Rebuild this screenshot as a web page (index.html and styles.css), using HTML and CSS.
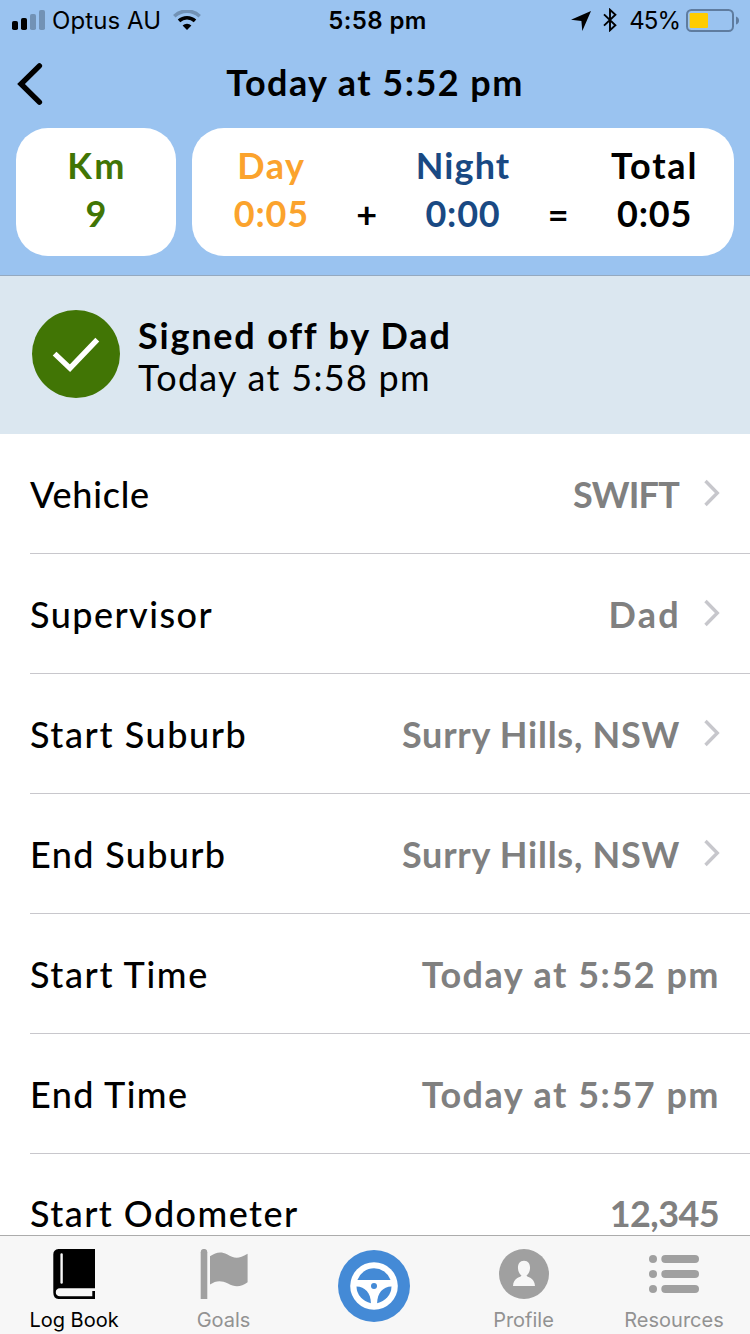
FILE: index.html
```
<!DOCTYPE html>
<html lang="en">
<head>
<meta charset="utf-8">
<title>Log Book</title>
<link rel="stylesheet" href="styles.css">
</head>
<body>
<div class="screen">
  <header class="header">
    <div class="status">
      <div class="status-left">
        <svg class="signal" width="34" height="20" viewBox="0 0 34 20"><rect y="11" width="6" height="9" rx="1.8"/><rect x="9" y="8" width="6" height="12" rx="1.8"/><g fill="#7292b5"><rect x="18" y="4" width="6" height="16" rx="1.8"/><rect x="27" width="6" height="20" rx="1.8"/></g></svg>
        <span class="carrier">Optus AU</span>
        <svg class="wifi" width="28" height="20" viewBox="0 0 28 20"><path d="M1.3 6.2A18.5 18.5 0 0 1 26.7 6.2" fill="none" stroke="#7292b5" stroke-width="3.6"/><path d="M6 10.9A11.6 11.6 0 0 1 22 10.9" fill="none" stroke="#000" stroke-width="3.6"/><path d="M14 20L9.6 15.4A6.4 6.4 0 0 1 18.4 15.4Z"/></svg>
      </div>
      <span class="clock">5:58 pm</span>
      <div class="status-right">
        <svg class="locate" width="20" height="20" viewBox="0 0 20 20"><path d="M20 0L11.3 20L10.4 9.9L0 8.8Z"/></svg>
        <svg class="bluetooth" width="14" height="24" viewBox="0 0 14 24"><path d="M1 6.4L12.4 17.2L7 22.2V1.8L12.4 6.8L1 17.6" fill="none" stroke="#000" stroke-width="1.9"/></svg>
        <span class="percent">45%</span>
        <svg class="battery" width="53" height="23" viewBox="0 0 53 23"><rect x="1" y="1" width="46" height="21" rx="4.5" fill="none" stroke="#5f7c9f" stroke-width="2"/><rect x="3.7" y="4" width="18.3" height="15" rx="1.2" fill="#fc0"/><path d="M50 7.5Q53 8.5 53 11.5T50 15.5Z" fill="#5f7c9f"/></svg>
      </div>
    </div>
    <div class="nav">
      <svg class="back" width="28" height="44" viewBox="0 0 28 44"><path d="M23.4 3.8L5 22L23.4 40.2" fill="none" stroke="#000" stroke-width="5.4" stroke-linecap="round"/></svg>
      <h1 class="title">Today at 5:52 pm</h1>
    </div>
    <div class="cards">
      <div class="card card-km">
        <span class="km-label">Km</span>
        <span>9</span>
      </div>
      <div class="card card-hours">
        <div class="sum day"><span class="day-label">Day</span><span class="digits">0:05</span></div>
        <div class="operator">+</div>
        <div class="sum night"><span class="night-label">Night</span><span class="digits">0:00</span></div>
        <div class="operator">=</div>
        <div class="sum"><span class="total-label">Total</span><span class="digits">0:05</span></div>
      </div>
    </div>
  </header>

  <section class="signoff">
    <svg width="88" height="88" viewBox="0 0 88 88"><circle cx="44" cy="44" r="44" fill="#417505"/><path d="M22.6 43.6L38 58.2L65.3 29.6" fill="none" stroke="#fff" stroke-width="5.4"/></svg>
    <div class="signoff-text">
      <strong>Signed off by Dad</strong>
      <span>Today at 5:58 pm</span>
    </div>
  </section>

  <main class="list">
    <div class="row"><span class="label vehicle">Vehicle</span><span class="value swift">SWIFT</span><svg class="chevron" width="16" height="28" viewBox="0 0 16 28"><path d="M1.5 2L13.3 14L1.5 26"/></svg></div>
    <div class="row"><span class="label">Supervisor</span><span class="value dad">Dad</span><svg class="chevron" width="16" height="28" viewBox="0 0 16 28"><path d="M1.5 2L13.3 14L1.5 26"/></svg></div>
    <div class="row"><span class="label wide">Start Suburb</span><span class="value suburb">Surry Hills, NSW</span><svg class="chevron" width="16" height="28" viewBox="0 0 16 28"><path d="M1.5 2L13.3 14L1.5 26"/></svg></div>
    <div class="row"><span class="label end">End Suburb</span><span class="value suburb">Surry Hills, NSW</span><svg class="chevron" width="16" height="28" viewBox="0 0 16 28"><path d="M1.5 2L13.3 14L1.5 26"/></svg></div>
    <div class="row"><span class="label wide">Start Time</span><span class="value">Today at 5:52 pm</span></div>
    <div class="row"><span class="label end">End Time</span><span class="value">Today at 5:57 pm</span></div>
    <div class="row last"><span class="label">Start Odometer</span><span class="value odometer">12,345</span></div>
  </main>

  <nav class="tabs">
    <div class="tab active">
      <svg width="50" height="50" viewBox="0 0 50 50"><path d="M9.5 0H46V39.3H11Q6.8 39.6 6.8 43.3T11 47.3H43.3V42H46V50H9.5Q4.3 49.5 4.3 43.5V5.5Q4.3 .5 9.5 0Z"/><path d="M12.6 5.5V33.5" stroke="#f7f7f7" stroke-width="2.4" stroke-linecap="round"/></svg>
      <span>Log Book</span>
    </div>
    <div class="tab">
      <svg width="50" height="50" viewBox="0 0 50 50"><path d="M1.7 50V3.2A3.3 3.3 0 0 1 8.3 3.2V50Z"/><path d="M11 7.2C17 3.2 22 2.2 28 5.3C35 9.3 39 10.5 48.6 4.8V33.3C42 38 36 38.5 29 34.5C22 31 17 31.4 11 35.6Z"/></svg>
      <span>Goals</span>
    </div>
    <div class="tab drive">
      <svg width="72" height="72" viewBox="-36 -36 72 72"><circle r="36" fill="#448ad6"/><circle r="23.8" fill="#fff"/><g fill="#448ad6"><path d="M-16.6 -6A17.6 17.6 0 0 1 16.6 -6Z"/><circle r="3"/><path d="M-17.5 .4C-9 .4 -3.2 7 -3.1 17.2A17.5 17.5 0 0 1 -17.5 .4Z"/><path d="M17.5 .4C9 .4 3.2 7 3.1 17.2A17.5 17.5 0 0 0 17.5 .4Z"/></g></svg>
    </div>
    <div class="tab">
      <svg width="50" height="50" viewBox="-25 -25 50 50"><circle r="25"/><path d="M0 -13.2C4.5 -13.2 6.3 -9.7 6 -5.5C5.7 -2 4.4 .2 2.5 1.4C2.3 3.2 10.8 3 11 12.1H-11C-10.8 3 -2.3 3.2 -2.5 1.4C-4.4 .2 -5.7 -2 -6 -5.5C-6.3 -9.7 -4.5 -13.2 0 -13.2Z" fill="#f7f7f7"/></svg>
      <span>Profile</span>
    </div>
    <div class="tab">
      <svg width="50" height="50" viewBox="0 0 50 50"><circle cx="4" cy="10" r="4"/><circle cx="4" cy="25" r="4"/><circle cx="4" cy="40" r="4"/><rect x="12.3" y="6" width="37.7" height="8" rx="4"/><rect x="12.3" y="21" width="37.7" height="8" rx="4"/><rect x="12.3" y="36" width="37.7" height="8" rx="4"/></svg>
      <span>Resources</span>
    </div>
  </nav>
</div>
</body>
</html>
```
FILE: styles.css
```
* { box-sizing: border-box; }
body { margin: 0; background: #fff; color: #000; font-family: Lato, "Open Sans", sans-serif; font-size: 36px; }
svg { display: block; flex: none; }
.screen { width: 750px; height: 1334px; display: flex; flex-direction: column; overflow: hidden; }

.header { height: 276px; flex: none; background: #9ac3f0; border-bottom: 1px solid #94a9c0; }

.status { height: 40px; display: grid; grid-template-columns: 300px 1fr 300px; font-family: Inter, sans-serif; font-size: 24px; line-height: 42px; }
.status-left, .status-right { display: flex; align-items: flex-start; white-space: nowrap; }
.status-left { padding-left: 12px; }
.signal { margin-top: 10px; }
.carrier { margin-left: 6px; letter-spacing: .1px; }
.wifi { margin: 10px 0 0 12px; }
.clock { text-align: center; font-weight: 600; letter-spacing: .4px; padding-left: 5px; }
.status-right { justify-content: flex-end; padding-right: 11px; }
.locate { margin-top: 11px; }
.bluetooth { margin: 8px 0 0 12px; }
.percent { margin-left: 12px; letter-spacing: -1px; }
.battery { margin: 9px 0 0 6px; }

.nav { height: 88px; display: grid; grid-template-columns: 100px 1fr 100px; padding-top: 18px; }
.back { margin: 4px 0 0 16px; }
.title { margin: 0; font-size: 36px; line-height: 48px; font-weight: 700; text-align: center; letter-spacing: 1.45px; }

.cards { display: flex; gap: 16px; padding: 0 16px; }
.card { height: 128px; padding-top: 13px; border-radius: 32px; background: #fff; font-weight: 700; line-height: 48px; text-align: center; }
.card-km { width: 160px; display: flex; flex-direction: column; align-items: center; color: #417505; }
.km-label { letter-spacing: 2.4px; margin-right: -2px; }
.card-hours { width: 542px; display: grid; grid-template-columns: repeat(5, 1fr); padding-left: 31px; padding-right: 32px; }
.sum { display: flex; flex-direction: column; align-items: center; }
.digits { letter-spacing: .8px; margin-right: -1px; }
.day { color: #fba32d; }
.day-label { letter-spacing: 1.6px; margin-right: -1px; }
.night { color: #194983; }
.night-label { letter-spacing: 1.1px; margin-right: -1px; }
.total-label { letter-spacing: 1.8px; margin-right: -1px; }
.operator { padding-top: 49px; }

.signoff { height: 158px; flex: none; display: flex; align-items: flex-start; gap: 18px; padding: 34px 32px 0; background: #dbe7f0; }
.signoff-text { display: flex; flex-direction: column; padding-top: 4px; line-height: 42px; }
.signoff-text strong { letter-spacing: 1.8px; }
.signoff-text span { letter-spacing: 1.3px; }

.list { flex: 1; min-height: 0; overflow: hidden; padding-left: 30px; }
.row { height: 120px; display: flex; align-items: center; border-bottom: 1px solid #c8c7cc; padding: 1px 30px 0 0; line-height: 48px; }
.last { padding-top: 0; padding-bottom: 1px; }
.label { flex: 1; font-weight: 500; letter-spacing: 1.45px; }
.vehicle { letter-spacing: .75px; }
.wide { letter-spacing: 1.6px; }
.end { letter-spacing: 1.35px; }
.value { color: #808080; font-weight: 700; letter-spacing: 1.5px; }
.swift { letter-spacing: -.8px; margin-right: 1px; }
.dad { letter-spacing: 2.3px; margin-right: -1px; }
.suburb { letter-spacing: .75px; }
.odometer { letter-spacing: -.6px; margin-right: 1px; }
.chevron { margin: -2px 0 0 24px; fill: none; stroke: #c7c7cc; stroke-width: 3.4; }

.tabs { height: 99px; flex: none; display: grid; grid-template-columns: 148px 151px 150px 149px 152px; background: #f7f7f7; border-top: 1px solid #acacac; font-family: Inter, sans-serif; font-size: 20px; color: #929292; }
.tab { display: flex; flex-direction: column; align-items: center; padding-top: 13px; fill: #a0a0a0; line-height: 24px; }
.tab span { margin-top: 9px; }
.active { color: #000; fill: #000; }
.drive { padding-top: 14px; }
```
